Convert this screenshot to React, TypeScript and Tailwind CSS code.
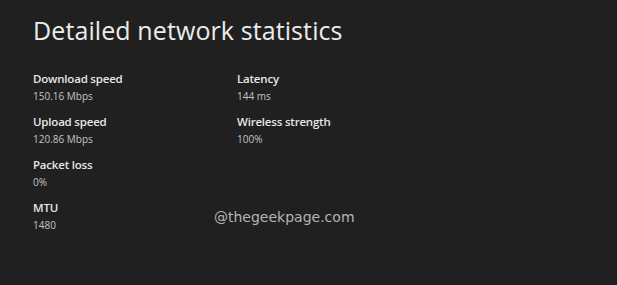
const stats = [
  [
    { label: 'Download speed', value: '150.16 Mbps' },
    { label: 'Upload speed', value: '120.86 Mbps' },
    { label: 'Packet loss', value: '0%' },
    { label: 'MTU', value: '1480' },
  ],
  [
    { label: 'Latency', value: '144 ms' },
    { label: 'Wireless strength', value: '100%' },
  ],
];

function Stat({ label, value }: { label: string; value: string }) {
  return (
    <div className="h-[43px]">
      <p className="text-[11.5px] leading-[16px] font-semibold text-[#e6e6e6] tracking-[-0.2px]">{label}</p>
      <p className="mt-[2px] text-[10px] leading-[14px] text-[#c4c4c4]">{value}</p>
    </div>
  );
}

export default function App() {
  return (
    <div
      className="w-[617px] h-[285px] bg-[#202020] pl-[33px] pt-[14px] overflow-hidden"
      style={{ fontFamily: '"Open Sans", "Noto Sans", sans-serif' }}
    >
      <h1 className="text-[25px] leading-[32px] text-[#ececec] tracking-[0.1px]">
        Detailed network statistics
      </h1>

      <div className="relative mt-[25px] flex">
        <div className="w-[204px] flex flex-col">
          {stats[0].map((s) => (
            <Stat key={s.label} {...s} />
          ))}
        </div>
        <div className="flex flex-col">
          {stats[1].map((s) => (
            <Stat key={s.label} {...s} />
          ))}
        </div>

        {/* watermark */}
        <span
          className="absolute left-[181px] top-[136px] text-[14px] leading-[20px] text-[#b4b4b4]"
          style={{ fontFamily: '"DejaVu Sans", sans-serif' }}
        >
          @thegeekpage.com
        </span>
      </div>
    </div>
  );
}
